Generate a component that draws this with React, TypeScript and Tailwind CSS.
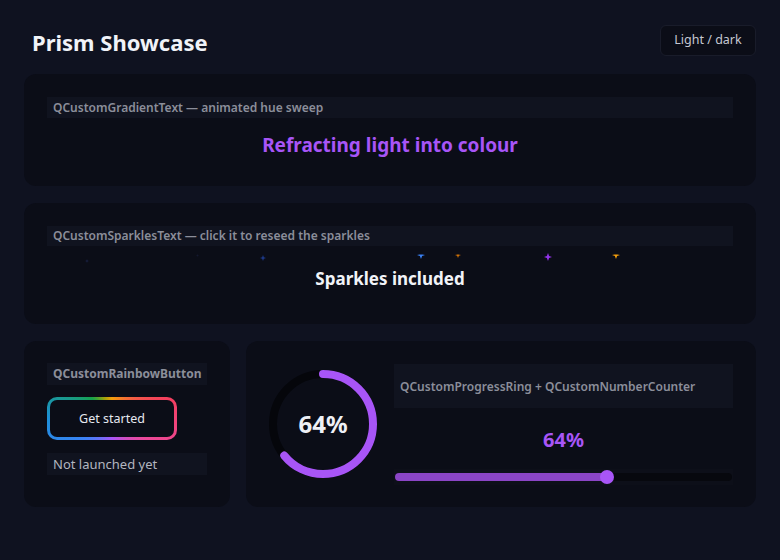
import React from "react";

const font = "font-['Noto_Sans',_'DejaVu_Sans',_sans-serif]";

function Sparkle({ x, y, color, size = 7, half = false, opacity = 1 }: { x: number; y: number; color: string; size?: number; half?: boolean; opacity?: number }) {
  const s = size;
  const c = s / 2;
  const d = `M${c} 0 L${c + s * 0.14} ${c - s * 0.14} L${s} ${c} L${c + s * 0.14} ${c + s * 0.14} L${c} ${s} L${c - s * 0.14} ${c + s * 0.14} L0 ${c} L${c - s * 0.14} ${c - s * 0.14} Z`;
  return (
    <svg
      className="absolute"
      style={{ left: x - c, top: y - c, opacity }}
      width={s}
      height={s}
      viewBox={`0 0 ${s} ${s}`}
    >
      {half ? (
        <clipPath id={`cp${x}`}>
          <rect x="0" y={c - 0.6} width={s} height={s} />
        </clipPath>
      ) : null}
      <path d={d} fill={color} clipPath={half ? `url(#cp${x})` : undefined} />
    </svg>
  );
}

function Ring() {
  const r = 50;
  const circ = 2 * Math.PI * r;
  const pct = 0.64;
  return (
    <div className="relative w-[110px] h-[110px] shrink-0 -ml-[1px]">
      <svg width="110" height="110" viewBox="0 0 110 110" className="-rotate-90">
        <circle cx="55" cy="55" r={r} fill="none" stroke="#05060b" strokeWidth="8" />
        <circle
          cx="55"
          cy="55"
          r={r}
          fill="none"
          stroke="#a855f7"
          strokeWidth="8"
          strokeLinecap="round"
          strokeDasharray={`${circ * pct} ${circ}`}
        />
      </svg>
      <div className="absolute inset-0 flex items-center justify-center text-[24px] font-bold text-[#eef0f6]">
        64%
      </div>
    </div>
  );
}

export default function App() {
  return (
    <div className={`w-[780px] h-[560px] bg-[#0f1220] px-6 pt-[25px] ${font}`}>
      <div className="flex items-center justify-between h-[31px]">
        <div className="pl-2 pt-[3px] text-[22px] font-bold text-[#f1f3f8] leading-none">Prism Showcase</div>
        <div className="h-[31px] w-[96px] rounded-md border border-[#191c2a] bg-[#0b0d17] flex items-center justify-center text-[12.5px] text-[#c5c8d2]">
          Light / dark
        </div>
      </div>

      <div className="mt-[18px] h-[112px] rounded-xl bg-[#0b0d17] px-[23px] pt-[23px]">
        <div className="h-[21px] bg-[#10131f] px-[6px] flex items-center text-[12px] font-semibold text-[#8b8e9a]">
          QCustomGradientText — animated hue sweep
        </div>
        <div className="mt-[14px] text-center text-[19px] leading-[26px] font-bold text-[#a855f7]">
          Refracting light into colour
        </div>
      </div>

      <div className="mt-[17px] h-[121px] rounded-xl bg-[#0b0d17] px-[23px] pt-[23px]">
        <div className="h-[20px] bg-[#10131f] px-[6px] flex items-center text-[12px] font-semibold text-[#8b8e9a]">
          QCustomSparklesText — click it to reseed the sparkles
        </div>
        <div className="relative h-[60px]">
          <Sparkle x={87 - 47} y={261 - 246} color="#1e2a55" size={4} opacity={0.7} />
          <Sparkle x={197 - 47} y={255 - 246} color="#1a2040" size={3} opacity={0.6} />
          <Sparkle x={263 - 47} y={258 - 246} color="#1e3a8a" size={6} />
          <Sparkle x={421 - 47} y={255 - 246} color="#3b82f6" size={8} half />
          <Sparkle x={458 - 47} y={255 - 246} color="#d97706" size={6} half />
          <Sparkle x={548 - 47} y={257 - 246} color="#9333ea" size={8} />
          <Sparkle x={616 - 47} y={255 - 246} color="#f59e0b" size={8} half />
          <div className="absolute left-0 right-0 top-[21px] text-center text-[17px] leading-[24px] font-bold text-[#f1f3f8]">
            Sparkles included
          </div>
        </div>
      </div>

      <div className="mt-[17px] flex gap-4">
        <div className="w-[206px] h-[166px] rounded-xl bg-[#0b0d17] pl-[23px] pt-[22px]">
          <div className="w-[160px] h-[22px] bg-[#10131f] px-[6px] flex items-center text-[12px] font-bold text-[#8b8e9a]">
            QCustomRainbowButton
          </div>
          <div className="mt-[12px] w-[130px] h-[43px] rounded-[10px] p-[3px] bg-[conic-gradient(from_0deg,#f59e0b,#f43f5e_70deg,#ec4899_120deg,#a855f7_180deg,#3b82f6_235deg,#1d8fd8_270deg,#16a34a_315deg,#a3a30b_340deg,#f59e0b_360deg)]">
            <div className="w-full h-full rounded-[7px] bg-[#0b0d17] flex items-center justify-center pt-[2px] text-[12.5px] text-[#e6e8ef]">
              Get started
            </div>
          </div>
          <div className="mt-[13px] w-[160px] h-[22px] bg-[#10131f] px-[6px] pt-[1px] flex items-center text-[13px] text-[#b3b6c0]">
            Not launched yet
          </div>
        </div>

        <div className="flex-1 h-[166px] rounded-xl bg-[#0b0d17] px-[23px] flex items-center gap-[16px]">
          <Ring />
          <div className="flex-1 flex flex-col pt-[1px]">
            <div className="h-[44px] bg-[#10131f] px-[6px] pt-[1px] flex items-center text-[12px] font-semibold text-[#8b8e9a]">
              QCustomProgressRing + QCustomNumberCounter
            </div>
            <div className="mt-[18px] text-center text-[20px] leading-[28px] font-bold text-[#a855f7]">64%</div>
            <div className="mt-[15px] h-[16px] bg-[#0d0f19] flex items-center px-[1px]">
              <div className="relative w-full h-[8px] rounded-full bg-[#07080e]">
                <div className="absolute left-0 top-0 h-full rounded-full bg-[#8b45c6]" style={{ width: "63%" }} />
                <div
                  className="absolute top-1/2 w-[14px] h-[14px] -translate-x-1/2 -translate-y-1/2 rounded-full bg-[#a855f7]"
                  style={{ left: "63%" }}
                />
              </div>
            </div>
          </div>
        </div>
      </div>
    </div>
  );
}
